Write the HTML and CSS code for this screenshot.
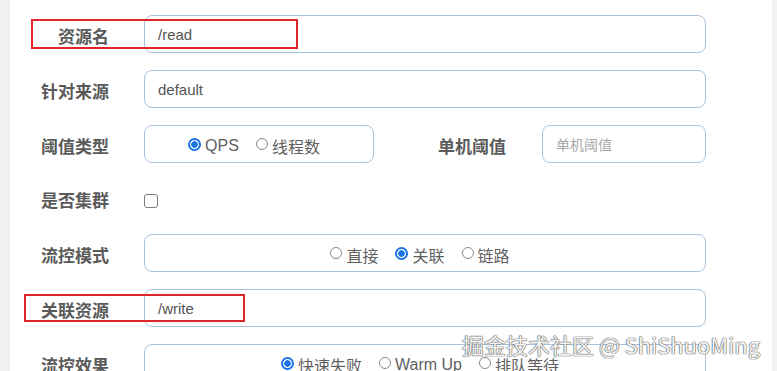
FILE: index.html
```html
<!DOCTYPE html>
<html lang="zh">
<head>
<meta charset="utf-8">
<link rel="stylesheet" href="styles.css">
</head>
<body>
<div class="page">
  <div class="side-left"></div>
  <main class="main">
    <form class="form">
      <div class="row">
        <label class="label">资源名</label>
        <div class="input"><span class="value">/read</span></div>
      </div>
      <div class="row">
        <label class="label">针对来源</label>
        <div class="input"><span class="value">default</span></div>
      </div>
      <div class="row">
        <label class="label">阈值类型</label>
        <div class="split">
          <div class="input input-radio input-short">
            <span class="radio checked"></span><span class="opt">QPS</span>
            <span class="radio"></span><span class="opt">线程数</span>
          </div>
          <label class="label label-inline">单机阈值</label>
          <div class="input input-small"><span class="placeholder">单机阈值</span></div>
        </div>
      </div>
      <div class="row row-check">
        <label class="label">是否集群</label>
        <div class="checkline"><span class="checkbox"></span></div>
      </div>
      <div class="row">
        <label class="label">流控模式</label>
        <div class="input input-radio">
          <span class="radio"></span><span class="opt">直接</span>
          <span class="radio checked"></span><span class="opt">关联</span>
          <span class="radio"></span><span class="opt">链路</span>
        </div>
      </div>
      <div class="row">
        <label class="label">关联资源</label>
        <div class="input"><span class="value">/write</span></div>
      </div>
      <div class="row">
        <label class="label">流控效果</label>
        <div class="input input-radio">
          <span class="radio checked"></span><span class="opt">快速失败</span>
          <span class="radio"></span><span class="opt">Warm Up</span>
          <span class="radio"></span><span class="opt">排队等待</span>
        </div>
      </div>
    </form>
    <div class="highlight highlight-a"></div>
    <div class="highlight highlight-b"></div>
  </main>
  <div class="side-right"></div>
  <div class="watermark">掘金技术社区 @ ShiShuoMing</div>
</div>
</body>
</html>
```

FILE: styles.css
```css
html, body {
  margin: 0;
  padding: 0;
  background: #ffffff;
  overflow: hidden;
}

.page {
  position: relative;
  display: flex;
  width: 777px;
  height: 371px;
  overflow: hidden;
  font-family: "Liberation Sans", "Noto Sans CJK SC", sans-serif;
}

.side-left {
  width: 10px;
  background: #f1f1f1;
  flex: none;
}

.side-right {
  width: 5px;
  background: #f3f3f3;
  flex: none;
}

.main {
  position: relative;
  flex: 1;
  background: #ffffff;
}

.form {
  display: flex;
  flex-direction: column;
  gap: 17px;
  padding: 15px 66px 0 0;
}

.row {
  display: grid;
  grid-template-columns: 99px 1fr;
  column-gap: 35px;
  align-items: center;
  height: 38px;
}

.row-check {
  height: 37px;
}

.label {
  text-align: right;
  font-family: "Noto Sans CJK SC", sans-serif;
  font-weight: 700;
  font-size: 17px;
  color: #5a5a5a;
  line-height: 20px;
  padding-top: 3px;
}

.input {
  box-sizing: border-box;
  height: 38px;
  border: 1.5px solid #a9c2dc;
  border-radius: 8px;
  display: flex;
  align-items: center;
  padding-left: 13px;
  background: #fff;
}

.value {
  font-size: 15px;
  color: #555;
}

.placeholder {
  font-family: "Noto Sans CJK SC", sans-serif;
  font-size: 14px;
  color: #a8a8a8;
}

.split {
  display: flex;
  align-items: center;
  height: 38px;
}

.input-short {
  width: 230px;
}

.input-small {
  width: 164px;
}

.label-inline {
  flex: 1;
  padding-right: 36px;
}

.input-radio {
  justify-content: center;
  padding-left: 0;
  padding-right: 10px;
  gap: 0;
}

.opt {
  font-family: "Liberation Sans", "Noto Sans CJK SC", sans-serif;
  font-size: 16px;
  color: #5f5f5f;
  margin-left: 4px;
  margin-right: 17px;
  padding-top: 3px;
}

.opt:last-child {
  margin-right: 0;
}

.radio {
  box-sizing: border-box;
  width: 12px;
  height: 12px;
  border: 1.5px solid #8a8a8a;
  border-radius: 50%;
  flex: none;
}

.radio.checked {
  width: 13px;
  height: 13px;
  border: 2px solid #1a73e8;
  background: radial-gradient(circle, #1a73e8 0 3px, #ffffff 3.5px);
}

.checkline {
  display: flex;
  align-items: center;
  height: 37px;
}

.checkbox {
  box-sizing: border-box;
  width: 14px;
  height: 14px;
  margin-top: 5px;
  border: 1.6px solid #7d7d7d;
  border-radius: 3px;
}

.highlight {
  position: absolute;
  border: 2px solid #e0262b;
  box-sizing: border-box;
  pointer-events: none;
}

.highlight-a {
  left: 21px;
  top: 19px;
  width: 267px;
  height: 30px;
}

.highlight-b {
  left: 14px;
  top: 294px;
  width: 221px;
  height: 28px;
}

.watermark {
  position: absolute;
  left: 462px;
  top: 330px;
  font-family: "Noto Sans CJK SC", sans-serif;
  font-size: 22px;
  line-height: 28px;
  color: #f4f4f4;
  white-space: nowrap;
  text-shadow: 0 0 1px #555, 0 0 1px #555, 0 0 1px #666;
}
```
